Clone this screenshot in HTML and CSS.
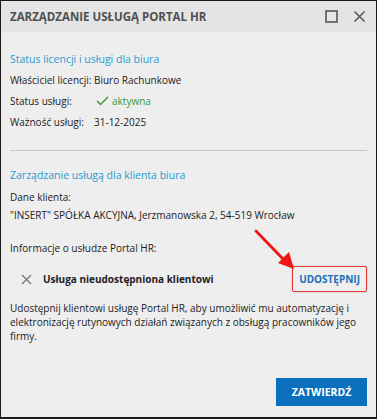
FILE: index.html
```html
<!DOCTYPE html>
<html lang="pl">
<head>
<meta charset="utf-8">
<link rel="stylesheet" href="styles.css">
</head>
<body>
<div class="dialog">
  <div class="titlebar">
    <div class="title">ZARZĄDZANIE USŁUGĄ PORTAL HR</div>
    <div class="controls">
      <svg class="ctl" width="13" height="13" viewBox="0 0 13 13"><rect x="1" y="1" width="11" height="11" fill="none" stroke="#555" stroke-width="1.6"/></svg>
      <svg class="ctl" width="13" height="13" viewBox="0 0 13 13"><path d="M1.5 1.5L11.5 11.5M11.5 1.5L1.5 11.5" stroke="#555" stroke-width="1.5"/></svg>
    </div>
  </div>
  <div class="body">
    <section class="first">
      <div class="heading">Status licencji i usługi dla biura</div>
      <div class="grid">
        <div>Właściciel licencji:</div><div>Biuro Rachunkowe</div>
        <div>Status usługi:</div><div class="ok"><svg width="13" height="10" viewBox="0 0 13 10"><path d="M1 5L4.5 8.5L12 1" fill="none" stroke="#3a9a3a" stroke-width="1.5"/></svg>aktywna</div>
        <div>Ważność usługi:</div><div>31-12-2025</div>
      </div>
    </section>
    <section class="second">
      <div class="heading">Zarządzanie usługą dla klienta biura</div>
      <div class="line">Dane klienta:</div>
      <div class="line">"INSERT" SPÓŁKA AKCYJNA, Jerzmanowska 2, 54-519 Wrocław</div>
      <div class="line info">Informacje o usłudze Portal HR:</div>
      <div class="status">
        <svg class="x" width="11" height="11" viewBox="0 0 11 11"><path d="M1 1L10 10M10 1L1 10" stroke="#777" stroke-width="1.4"/></svg>
        <span class="stext">Usługa nieudostępniona klientowi</span>
        <span class="share">UDOSTĘPNIJ</span>
        <svg class="arrow" width="44" height="44" viewBox="0 0 44 44"><path d="M2 2L30 31" stroke="#f01515" stroke-width="2.8" stroke-linecap="round"/><path d="M24 34L40 40L35 23Z" fill="#f01515"/></svg>
      </div>
      <p class="desc">Udostępnij klientowi usługę Portal HR, aby umożliwić mu automatyzację i elektronizację rutynowych działań związanych z obsługą pracowników jego firmy.</p>
    </section>
    <div class="footer"><button class="confirm">ZATWIERDŹ</button></div>
  </div>
</div>
</body>
</html>
```
FILE: styles.css
```css
html, body { margin: 0; padding: 0; background: #fff; }
body { font-family: "Open Sans", "Noto Sans", sans-serif; font-size: 10px; color: #222; }
.dialog { width: 377px; height: 419px; box-sizing: border-box; border: 1px solid #1a1a1a; border-bottom-width: 2px; background: #eeeeee; display: flex; flex-direction: column; }
.titlebar { height: 31px; background: #e4e4e4; display: flex; align-items: center; justify-content: space-between; padding: 0 10px 0 9px; flex: none; }
.title { font-weight: 700; font-size: 11.5px; color: #505050; }
.controls { display: flex; gap: 15px; align-items: center; }
.body { flex: 1; padding: 0 9px; display: flex; flex-direction: column; }
.first { padding-top: 19px; padding-bottom: 20px; border-bottom: 1px solid #c8c8c8; }
.heading { color: #2a9bd0; font-size: 10.5px; line-height: 16px; margin-bottom: 5px; }
.grid { display: grid; grid-template-columns: 84px auto; row-gap: 5px; line-height: 16px; }
.ok { color: #3a9a3a; display: flex; align-items: center; gap: 3px; margin-left: 2px; }
.second { padding-top: 16px; }
.line { line-height: 18px; }
.info { margin-top: 15px; }
.status { position: relative; display: flex; align-items: center; margin-top: 10px; height: 24px; }
.x { margin-left: 11px; margin-right: 11px; }
.stext { font-weight: 700; flex: 1; }
.share { font-weight: 700; color: #1a70b8; border: 1px solid #e53935; border-radius: 2px; padding: 5px 6px; box-shadow: 0 0 2px rgba(0,0,0,0.25); margin-right: 0; }
.arrow { position: absolute; right: 69px; top: -38px; }
.desc { margin: 10px 0 0; line-height: 14px; }
.footer { margin-top: auto; padding-bottom: 11px; display: flex; justify-content: flex-end; }
.confirm { background: #0a6fbd; color: #fff; font-family: inherit; font-weight: 700; font-size: 10.5px; border: none; width: 91px; height: 28px; padding: 0; }
```
